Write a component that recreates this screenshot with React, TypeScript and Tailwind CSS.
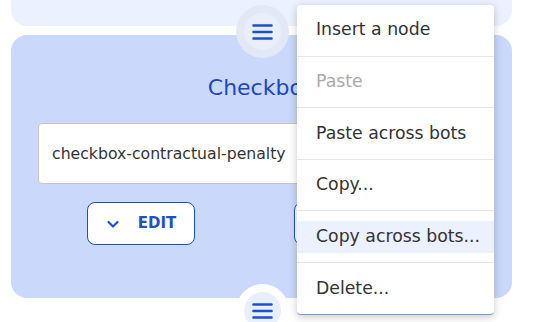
import React from "react";

const font = { fontFamily: '"DejaVu Sans", "Noto Sans", sans-serif' };

function Burger() {
	return (
		<svg width="21" height="16" viewBox="0 0 21 16" fill="none">
			<path
				d="M1.5 1.5h18M1.5 8h18M1.5 14.5h18"
				stroke="#1f4fd1"
				strokeWidth="2.6"
				strokeLinecap="round"
			/>
		</svg>
	);
}

function ChevronDown() {
	return (
		<svg width="14" height="14" viewBox="0 0 14 14" fill="none">
			<path
				d="M2.5 5l4.5 4.5L11.5 5"
				stroke="#1f4fd1"
				strokeWidth="2.2"
				strokeLinecap="round"
				strokeLinejoin="round"
			/>
		</svg>
	);
}

const items = [
	{ label: "Insert a node" },
	{ label: "Paste", disabled: true },
	{ label: "Paste across bots" },
	{ label: "Copy..." },
	{ label: "Copy across bots...", active: true },
	{ label: "Delete..." },
];

export default function App() {
	return (
		<div
			className="relative h-[322px] w-[534px] overflow-hidden bg-white"
			style={font}
		>
			<div className="ml-[11px] h-[26px] w-[501px] rounded-b-[16px] bg-[#ebf1fe]" />

			<div className="ml-[11px] mt-[9px] flex h-[263px] w-[501px] flex-col items-center rounded-[16px] bg-[#c9d8fb] px-[27px] pt-[39px]">
				<div className="text-[22px] leading-[28px] text-[#1e47c2]">
					Checkbox
				</div>
				<div className="mt-[21px] flex h-[61px] w-full items-center rounded-[4px] border border-[#c4c4c4] bg-white px-[13px] text-[15.7px] text-[#333]">
					checkbox-contractual-penalty
				</div>
				<div className="mt-[18px] flex gap-[99px]">
					<button className="flex h-[43px] w-[108px] items-center justify-center gap-[18px] rounded-[8px] border border-[#1e4fc2] bg-white text-[15px] font-bold text-[#1f4fd1]">
						<ChevronDown />
						EDIT
					</button>
					<button className="h-[43px] w-[142px] rounded-[8px] border border-[#1e4fc2] bg-white" />
				</div>
			</div>

			<div className="absolute left-[236px] top-[5px] flex h-[53px] w-[53px] items-center justify-center rounded-full bg-[#e2e8f5]">
				<div className="flex h-[37px] w-[37px] items-center justify-center rounded-full bg-[#e9eefb]">
					<Burger />
				</div>
			</div>

			<div className="absolute left-[236px] top-[284px] flex h-[53px] w-[53px] items-center justify-center rounded-full bg-white">
				<div className="flex h-[37px] w-[37px] items-center justify-center rounded-full bg-[#e8effd]">
					<Burger />
				</div>
			</div>

			<div className="absolute left-[297px] top-[5px] w-[197px] rounded-[4px] border-b border-[#7d95d6] bg-white shadow-[0_2px_8px_rgba(0,0,0,0.22)]">
				{items.map((item, i) => (
					<div
						key={item.label}
						className={
							i < items.length - 1
								? "flex h-[51.6px] items-center border-b border-[#e6e6e6]"
								: "flex h-[51px] items-center"
						}
					>
						<div
							className={
								item.active
									? "flex h-[32px] w-full items-center whitespace-nowrap bg-[#ebf1fe] px-[19px] text-[17.3px] text-[#333]"
									: item.disabled
										? "flex h-[32px] w-full items-center whitespace-nowrap px-[19px] text-[17.3px] text-[#aaa]"
										: "flex h-[32px] w-full items-center whitespace-nowrap px-[19px] text-[17.3px] text-[#333]"
							}
						>
							{item.label}
						</div>
					</div>
				))}
			</div>
		</div>
	);
}
